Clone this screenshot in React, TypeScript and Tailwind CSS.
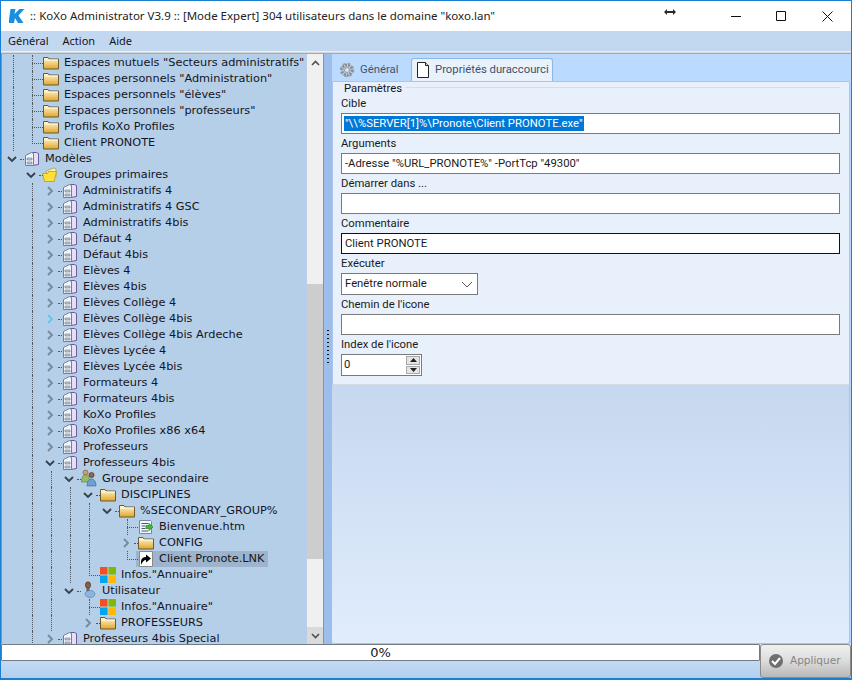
import type { ReactNode } from 'react';

type IconName = 'folder' | 'folderOpen' | 'model' | 'doc' | 'group' | 'user' | 'windows' | 'htm' | 'link';

type Row = {
  label: string;
  level: number;
  icon: IconName;
  guides?: number[];
  chevron?: 'open' | 'closed' | 'hover';
  last?: boolean;
  selected?: boolean;
};

function FolderIcon() {
  return (
    <svg width="16" height="16" viewBox="0 0 16 16">
      <defs>
        <linearGradient id="fold" x1="0" y1="0" x2="0" y2="1">
          <stop offset="0" stopColor="#fff8d4" />
          <stop offset="1" stopColor="#e0a52a" />
        </linearGradient>
      </defs>
      <path d="M.5 2.500h4.500l1 1.500h9.500v10h-15z" fill="url(#fold)" stroke="#6e5a2c" />
      <path d="M1 5h14" stroke="#fffdf0" />
    </svg>
  );
}

function FolderOpenIcon() {
  return (
    <svg width="18" height="16" viewBox="0 0 18 16" className="-ml-[2px]">
      <path d="M5 4l8-3 2 1v8l-8 4z" fill="#fff3a8" stroke="#a8923e" strokeWidth=".7" />
      <path d="M1.500 6.500h5l1-2h8l-2.500 10h-9.500z" fill="#ffe233" stroke="#b89a24" strokeWidth=".8" />
    </svg>
  );
}

function ModelIcon() {
  return (
    <svg width="16" height="16" viewBox="0 0 16 16">
      <path d="M8.500 1.500h4l2 1v11l-6 1z" fill="#e6def2" stroke="#6d5a9c" />
      <path d="M1.500 4.500l6-3 2 1v12h-8z" fill="#f3f6fb" stroke="#6f7f9c" />
      <path d="M3 7h5v2h-5zM3 11h5v2h-5z" fill="#b7c7de" stroke="#6f7f9c" strokeWidth=".6" />
    </svg>
  );
}

function GroupIcon() {
  return (
    <svg width="18" height="18" viewBox="0 0 18 18" className="-mt-[2px] -ml-[1px]">
      <circle cx="5.500" cy="3.500" r="2.500" fill="#caa176" stroke="#6f5230" strokeWidth=".6" />
      <path d="M1.500 13c0-5 1.500-7 4-7s4 2 4 7z" fill="#9bbb62" stroke="#5c7a38" strokeWidth=".6" />
      <circle cx="11.500" cy="6" r="2.600" fill="#8c6748" stroke="#40301f" strokeWidth=".6" />
      <path d="M7 17c0-5 2-7 4.500-7s4.500 2 4.500 7z" fill="#6f9ed2" stroke="#3e6591" strokeWidth=".6" />
    </svg>
  );
}

function UserIcon() {
  return (
    <svg width="18" height="18" viewBox="0 0 18 18" className="-mt-[2px] -ml-[1px]">
      <ellipse cx="8" cy="4" rx="2.600" ry="3.200" fill="#8a5f3c" stroke="#3f2a18" strokeWidth=".6" />
      <path d="M6.500 7h3v5h-3z" fill="#5e6066" />
      <ellipse cx="10" cy="13" rx="5" ry="3.500" fill="#8cb4dc" stroke="#52789f" strokeWidth=".6" />
    </svg>
  );
}

function WindowsIcon() {
  return (
    <svg width="16" height="16" viewBox="0 0 16 16">
      <rect x="0" y="0" width="7.500" height="7.500" fill="#f25022" />
      <rect x="8.500" y="0" width="7.500" height="7.500" fill="#7fba00" />
      <rect x="0" y="8.500" width="7.500" height="7.500" fill="#00a4ef" />
      <rect x="8.500" y="8.500" width="7.500" height="7.500" fill="#ffb900" />
    </svg>
  );
}

function HtmIcon() {
  return (
    <svg width="16" height="16" viewBox="0 0 16 16">
      <path d="M1.500 1.500h11l1 1v12h-12z" fill="#f4f7fc" stroke="#7488a8" />
      <path d="M3.500 4.500h7M3.500 7h4M3.500 9.500h4M3.500 12h7" stroke="#4a5a70" />
      <path d="M8 6.500h3v-2l4 3.500-4 3.500v-2h-3z" fill="#38c030" stroke="#1c7a18" strokeWidth=".6" />
    </svg>
  );
}

function LinkIcon() {
  return (
    <svg width="16" height="16" viewBox="0 0 16 16">
      <path d="M1.500 .5h13v15h-13z" fill="#fff" stroke="#8a8a8a" />
      <rect x="2" y="1" width="12" height="14" fill="#fff" />
      <path d="M3 14v-3.500c0-3 2-4.500 5-4.500v-2.500l5 4-5 4v-2.500c-2 0-3.500 1.500-5 5z" fill="#000" />
    </svg>
  );
}

const ICONS: Record<IconName, () => ReactNode> = {
  folder: FolderIcon,
  folderOpen: FolderOpenIcon,
  model: ModelIcon,
  doc: ModelIcon,
  group: GroupIcon,
  user: UserIcon,
  windows: WindowsIcon,
  htm: HtmIcon,
  link: LinkIcon,
};

const closed = (label: string, chevron: Row['chevron'] = 'closed'): Row => ({
  label,
  level: 2,
  icon: 'doc',
  guides: [1],
  chevron,
});

const rows: Row[] = [
  { label: 'Espaces mutuels "Secteurs administratifs"', level: 1, icon: 'folder', guides: [0] },
  { label: 'Espaces personnels "Administration"', level: 1, icon: 'folder', guides: [0] },
  { label: 'Espaces personnels "élèves"', level: 1, icon: 'folder', guides: [0] },
  { label: 'Espaces personnels "professeurs"', level: 1, icon: 'folder', guides: [0] },
  { label: 'Profils KoXo Profiles', level: 1, icon: 'folder', guides: [0] },
  { label: 'Client PRONOTE', level: 1, icon: 'folder', guides: [0], last: true },
  { label: 'Modèles', level: 0, icon: 'model', chevron: 'open' },
  { label: 'Groupes primaires', level: 1, icon: 'folderOpen', chevron: 'open' },
  closed('Administratifs 4'),
  closed('Administratifs 4 GSC'),
  closed('Administratifs 4bis'),
  closed('Défaut 4'),
  closed('Défaut 4bis'),
  closed('Elèves 4'),
  closed('Elèves 4bis'),
  closed('Elèves Collège 4'),
  closed('Elèves Collège 4bis', 'hover'),
  closed('Elèves Collège 4bis Ardeche'),
  closed('Elèves Lycée 4'),
  closed('Elèves Lycée 4bis'),
  closed('Formateurs 4'),
  closed('Formateurs 4bis'),
  closed('KoXo Profiles'),
  closed('KoXo Profiles x86 x64'),
  closed('Professeurs'),
  closed('Professeurs 4bis', 'open'),
  { label: 'Groupe secondaire', level: 3, icon: 'group', guides: [1, 2], chevron: 'open' },
  { label: 'DISCIPLINES', level: 4, icon: 'folder', guides: [1, 2, 3], chevron: 'open' },
  { label: '%SECONDARY_GROUP%', level: 5, icon: 'folder', guides: [1, 2, 3, 4], chevron: 'open' },
  { label: 'Bienvenue.htm', level: 6, icon: 'htm', guides: [1, 2, 3, 4] },
  { label: 'CONFIG', level: 6, icon: 'folder', guides: [1, 2, 3, 4], chevron: 'closed' },
  { label: 'Client Pronote.LNK', level: 6, icon: 'link', guides: [1, 2, 3, 4], last: true, selected: true },
  { label: 'Infos."Annuaire"', level: 4, icon: 'windows', guides: [1, 2, 3], last: true },
  { label: 'Utilisateur', level: 3, icon: 'user', guides: [1, 2], chevron: 'open' },
  { label: 'Infos."Annuaire"', level: 4, icon: 'windows', guides: [1, 2] },
  { label: 'PROFESSEURS', level: 4, icon: 'folder', guides: [1, 2], chevron: 'closed' },
  closed('Professeurs 4bis Special'),
];

function Chevron({ kind }: { kind: 'open' | 'closed' | 'hover' }) {
  if (kind === 'open') {
    return (
      <svg width="10" height="7" viewBox="0 0 10 7" className="absolute -left-[6px] top-[5px]">
        <path d="M1 1l4 4 4-4" fill="none" stroke="#3a3f45" strokeWidth="1.800" />
      </svg>
    );
  }
  return (
    <svg width="7" height="10" viewBox="0 0 7 10" className="absolute -left-[4px] top-[3px]">
      <path d="M1 1l4 4-4 4" fill="none" stroke={kind === 'hover' ? '#62c6ee' : '#75899b'} strokeWidth="1.800" />
    </svg>
  );
}

function TreeRow({ row }: { row: Row }) {
  const Icon = ICONS[row.icon];
  const cells = [];
  for (let i = 0; i < row.level; i++) {
    cells.push(
      <div
        key={i}
        className={`h-4 w-[19px] shrink-0 ${row.guides?.includes(i) ? 'border-l border-dotted border-[#4d5660]' : ''}`}
      />,
    );
  }
  return (
    <div className="flex h-4 shrink-0 items-center">
      <div className="w-[11px] shrink-0" />
      {cells}
      <div className="relative h-4 w-[11px] shrink-0">
        {row.chevron ? (
          <>
            <div className="absolute left-[7px] right-0 top-[8px] border-t border-dotted border-[#4d5660]" />
            <Chevron kind={row.chevron} />
          </>
        ) : (
          <>
            <div
              className={`absolute left-0 top-0 border-l border-dotted border-[#4d5660] ${row.last ? 'h-[9px]' : 'h-4'}`}
            />
            <div className="absolute left-0 right-0 top-[8px] border-t border-dotted border-[#4d5660]" />
          </>
        )}
      </div>
      <div className={`-ml-[2px] flex h-4 items-center pl-[2px] pr-1 ${row.selected ? 'bg-[#9db4cc]' : ''}`}>
        <div className="h-4 w-4 shrink-0">
          <Icon />
        </div>
        <span className="ml-[5px] whitespace-nowrap">{row.label}</span>
      </div>
    </div>
  );
}

function ScrollBar() {
  return (
    <div className="flex w-[16px] shrink-0 flex-col bg-[#f0f0f0]">
      <div className="flex h-[17px] items-center justify-center">
        <svg width="9" height="6" viewBox="0 0 9 6">
          <path d="M1 5l3.500-3.500L8 5" fill="none" stroke="#505050" strokeWidth="1.600" />
        </svg>
      </div>
      <div className="h-[213px]" />
      <div className="h-[275px] bg-[#cdcdcd]" />
      <div className="flex-1" />
      <div className="flex h-[17px] items-center justify-center bg-[#dadada]">
        <svg width="9" height="6" viewBox="0 0 9 6">
          <path d="M1 1l3.500 3.500L8 1" fill="none" stroke="#505050" strokeWidth="1.600" />
        </svg>
      </div>
    </div>
  );
}

function Field({ label, value, focused, selected }: { label: string; value?: string; focused?: boolean; selected?: boolean }) {
  return (
    <div className="flex flex-col">
      <div className="h-[19px] leading-[20px]">{label}</div>
      <div
        className={`flex h-[21px] items-center border bg-white pl-[2px] ${focused ? 'border-[#111]' : 'border-[#7a7a7a]'}`}
      >
        {value && (
          <span className={`whitespace-nowrap px-[1px] leading-[15px] ${selected ? 'bg-[#0078d7] text-white' : ''}`}>
            {value}
          </span>
        )}
      </div>
    </div>
  );
}

export default function App() {
  return (
    <div
      className="flex h-[680px] w-[852px] flex-col overflow-hidden border border-b-2 border-[#1b7fd0] bg-white text-[#14141e]"
      style={{ fontFamily: '"Liberation Sans", sans-serif' }}
    >
      {/* Title bar */}
      <div className="flex h-[30px] shrink-0 items-center bg-white font-['Noto_Sans'] text-[11.5px] text-[#222]">
        <svg width="16" height="16" viewBox="0 0 16 16" className="ml-[8px] shrink-0">
          <path d="M1.500 1h5l-1 5 5-5h5l-6 6.500 5 7.500h-5.500l-3-5-1 5h-5.500z" fill="#1a8fe0" />
        </svg>
        <span className="ml-[5px] whitespace-nowrap">
          :: KoXo Administrator V3.9 :: [Mode Expert] 304 utilisateurs dans le domaine "koxo.lan"
        </span>
        <div className="flex-1" />
        <svg width="12" height="8" viewBox="0 0 12 8" className="-mt-[8px] mr-[55px] shrink-0">
          <path d="M0 4l3-3v2h6v-2l3 3-3 3v-2h-6v2z" fill="#2a2a2a" />
        </svg>
        <svg width="10" height="10" viewBox="0 0 10 10" className="mr-[35px] shrink-0">
          <path d="M0 5.500h10" stroke="#111" />
        </svg>
        <svg width="10" height="10" viewBox="0 0 10 10" className="mr-[36px] shrink-0">
          <path d="M.5 .5h9v9h-9z" fill="none" stroke="#111" />
        </svg>
        <svg width="11" height="11" viewBox="0 0 11 11" className="mr-[18px] shrink-0">
          <path d="M.5 .5l10 10M10.500 .5l-10 10" stroke="#111" />
        </svg>
      </div>

      {/* Menu */}
      <div className="flex h-[20px] shrink-0 items-center gap-[14px] bg-[#c2d8f0] pl-[7px] pt-px font-['Noto_Sans'] text-[11px]">
        <span>Général</span>
        <span>Action</span>
        <span>Aide</span>
      </div>
      <div className="h-[3px] shrink-0 border-t border-b border-t-[#e8eef5] border-b-[#a8a8a8] bg-[#d8d8d8]" />

      {/* Body */}
      <div className="flex min-h-0 flex-1 bg-[#bbdaff]">
        <div className="flex w-[323px] shrink-0 border-x border-[#8c939b] bg-[#b5cfe9]">
          <div className="flex min-w-0 flex-1 flex-col overflow-hidden pt-px font-['DejaVu_Sans'] text-[11.3px]">
            {rows.map((row, i) => (
              <TreeRow key={i} row={row} />
            ))}
          </div>
          <ScrollBar />
        </div>

        {/* Splitter */}
        <div className="flex w-[8px] shrink-0 flex-col items-center justify-center gap-[1px] bg-[#9dbdea] pb-[8px]">
          {Array.from({ length: 9 }, (_, i) => (
            <div key={i} className="h-[3px] w-[2px] border-b border-[#111]" />
          ))}
        </div>

        {/* Right side */}
        <div className="flex min-w-0 flex-1 flex-col pr-[1px] font-['Roboto'] text-[11.3px]">
          <div className="flex h-[27px] shrink-0 items-end pl-[1px]">
            <div className="flex h-[22px] w-[78px] items-center gap-[5px] pl-[6px] text-[#44546a]">
              <svg width="16" height="16" viewBox="0 0 16 16" className="shrink-0">
                <circle cx="8" cy="8" r="5" fill="none" stroke="#8a8a8a" strokeWidth="3" strokeDasharray="2 1" />
                <circle cx="8" cy="8" r="6.500" fill="none" stroke="#9a9a9a" strokeWidth="1.500" strokeDasharray="2.500 2.600" />
                <circle cx="8" cy="8" r="2.500" fill="#dfe6ee" stroke="#777" strokeWidth=".7" />
              </svg>
              <span>Général</span>
            </div>
            <div className="flex h-[23px] w-[142px] items-center rounded-t-[3px] border border-b-0 border-[#8fb6e6] bg-[#e9f1fb] pl-[3px] text-[#3f5068]">
              <svg width="16" height="16" viewBox="0 0 16 16" className="shrink-0">
                <path d="M2.500 .5h8l3 3v12h-11z" fill="#fff" stroke="#222" />
                <path d="M10.500 .5v3h3" fill="#ddd" stroke="#222" />
              </svg>
              <span className="ml-[4px] whitespace-nowrap">Propriétés duraccourci</span>
            </div>
          </div>

          <div className="flex h-[304px] shrink-0 flex-col rounded-t-[2px] border border-[#a8c6ec] border-b-[#d8dde3] bg-[#e8f0fb] pl-[8px] pr-[9px]">
            <div className="flex h-[12px] items-center">
              <span className="ml-[2px] translate-y-px px-[1px]">Paramètres</span>
              <div className="ml-[2px] h-px flex-1 -translate-y-[1px] bg-[#d8dde3]" />
            </div>
            <div className="flex flex-col text-[#1a1a1a]">
              <Field label="Cible" value={'"\\\\%SERVER[1]%\\Pronote\\Client PRONOTE.exe"'} selected />
              <Field label="Arguments" value={'-Adresse "%URL_PRONOTE%" -PortTcp "49300"'} />
              <Field label="Démarrer dans ..." />
              <Field label="Commentaire" value="Client PRONOTE" focused />
              <div className="h-[19px] leading-[20px]">Exécuter</div>
              <div className="flex h-[22px] w-[137px] items-center justify-between border border-[#7a7a7a] bg-white pl-[3px] pr-[3px]">
                <span>Fenêtre normale</span>
                <svg width="12" height="7" viewBox="0 0 12 7" className="mr-[1px]">
                  <path d="M1 1l5 5 5-5" fill="none" stroke="#555" />
                </svg>
              </div>
              <Field label="Chemin de l'icone" />
              <div className="h-[19px] leading-[20px]">Index de l'icone</div>
              <div className="flex h-[22px] w-[81px] items-center border border-[#7a7a7a] bg-white pl-[2px]">
                <span className="flex-1">0</span>
                <div className="mr-[1px] flex h-[18px] w-[14px] flex-col gap-[1px]">
                  <div className="flex flex-1 items-center justify-center border border-[#a8a8a8] bg-[#e4e4e4]">
                    <svg width="7" height="4" viewBox="0 0 7 4">
                      <path d="M3.500 0l3.500 4h-7z" fill="#222" />
                    </svg>
                  </div>
                  <div className="flex flex-1 items-center justify-center border border-[#a8a8a8] bg-[#e4e4e4]">
                    <svg width="7" height="4" viewBox="0 0 7 4">
                      <path d="M0 0h7l-3.500 4z" fill="#222" />
                    </svg>
                  </div>
                </div>
              </div>
            </div>
          </div>

          <div className="min-h-0 flex-1 rounded-b-[3px] border-b border-r border-[#a8c6ec] bg-gradient-to-b from-[#c6d8ef] to-[#e1edfd]" />
        </div>
      </div>

      {/* Status */}
      <div className="flex h-[34px] shrink-0 bg-gradient-to-b from-[#d2e5fb] to-[#b3cfee]">
        <div className="flex min-w-0 flex-1 flex-col">
          <div className="flex h-[17px] items-center justify-center rounded-[1px] border border-[#737b84] bg-white font-['DejaVu_Sans'] text-[13px]">
            0%
          </div>
        </div>
        <div className="flex w-[91px] shrink-0 items-center gap-[6px] rounded-[3px] border border-[#8a8a8a] bg-gradient-to-b from-[#f0f0f0] via-[#dcdcdc] to-[#b8b8b8] pl-[7px]">
          <svg width="16" height="16" viewBox="0 0 16 16" className="shrink-0">
            <circle cx="8" cy="8" r="7" fill="#6f6f6f" />
            <path d="M4 8l3 3 5-6" fill="none" stroke="#fff" strokeWidth="2" />
          </svg>
          <span className="font-['DejaVu_Sans'] text-[10.5px] text-[#858585]">Appliquer</span>
        </div>
      </div>
    </div>
  );
}
